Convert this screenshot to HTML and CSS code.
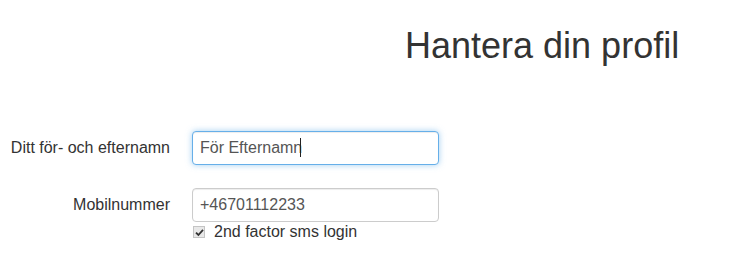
FILE: index.html
```html
<!doctype html>
<html lang="sv">
<head>
	<meta charset="UTF-8">
	<title>Hantera din profil</title>
	<link rel="stylesheet" href="styles.css">
</head>
<body>
	<div class="page">
		<h1 class="title">Hantera din profil</h1>
		<form class="profile">
			<div class="row">
				<label class="label" for="name">Ditt för- och efternamn</label>
				<div class="field">
					<input type="text" id="name" class="input focus" value="För Efternamn">
					<span class="caret"></span>
				</div>
			</div>
			<div class="row">
				<label class="label" for="phone">Mobilnummer</label>
				<div class="field">
					<input type="text" id="phone" class="input" value="+46701112233">
					<label class="check">
						<input type="checkbox" checked>
						<span class="box"><svg width="9" height="9" viewBox="0 0 9 9"><path d="M1 4.6 L3.4 7 L8 1.8" fill="none" stroke="#333" stroke-width="1.8"/></svg></span>
						2nd factor sms login
					</label>
				</div>
			</div>
		</form>
	</div>
</body>
</html>
```

FILE: styles.css
```css
body{
	margin:0;
	font-family:"Liberation Sans", Arial, sans-serif;
	font-size:16px;
	color:#333;
	background:#fff;
}
.page{
	padding-top:26px;
}
.title{
	margin:0 0 0 405px;
	font-size:36px;
	font-weight:normal;
	line-height:40px;
}
.profile{
	margin-top:65px;
}
.row{
	display:flex;
	margin-bottom:23px;
}
.label{
	width:170px;
	padding-top:7px;
	line-height:20px;
	text-align:right;
}
.field{
	position:relative;
	margin-left:22px;
	width:247px;
}
.input{
	display:block;
	box-sizing:border-box;
	width:247px;
	height:34px;
	padding:6px 7px;
	font-family:inherit;
	font-size:16px;
	color:#555;
	background:#fff;
	border:1px solid #ccc;
	border-radius:4px;
	box-shadow:inset 0 1px 1px rgba(0,0,0,.075);
	outline:none;
}
.input.focus{
	border-color:#66afe9;
	box-shadow:inset 0 1px 1px rgba(0,0,0,.075), 0 0 6px rgba(102,175,233,.6);
}
.caret{
	position:absolute;
	left:108px;
	top:7px;
	width:1px;
	height:19px;
	background:#222;
}
.check{
	display:flex;
	align-items:center;
	margin-top:0;
	line-height:20px;
}
.check input{
	display:none;
}
.box{
	display:flex;
	align-items:center;
	justify-content:center;
	box-sizing:border-box;
	width:12px;
	height:12px;
	margin:0 9px 0 1px;
	border:1px solid #c4c4c4;
	background:#e8e8e8;
}
```
